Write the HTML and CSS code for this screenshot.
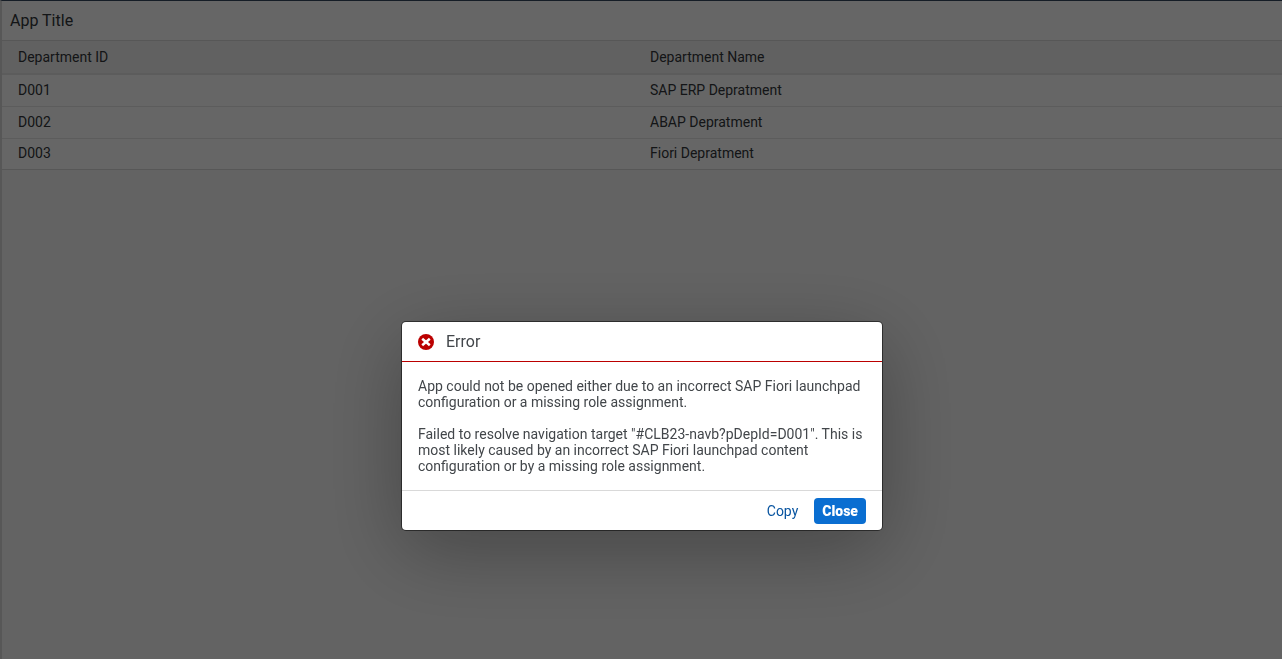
FILE: index.html
```html
<!DOCTYPE html>
<html lang="en">
<head>
<meta charset="utf-8">
<meta name="viewport" content="width=device-width, initial-scale=1">
<title>App Title</title>
<link rel="stylesheet" href="styles.css">
</head>
<body>
<main class="page">
  <header class="page-header">
    <h1 class="page-title">App Title</h1>
  </header>
  <table class="list">
    <thead>
      <tr><th scope="col">Department ID</th><th scope="col">Department Name</th></tr>
    </thead>
    <tbody>
      <tr><td>D001</td><td>SAP ERP Depratment</td></tr>
      <tr><td>D002</td><td>ABAP Depratment</td></tr>
      <tr><td>D003</td><td>Fiori Depratment</td></tr>
    </tbody>
  </table>
</main>
<div class="overlay">
  <section class="dialog" role="alertdialog" aria-modal="true" aria-labelledby="dialog-title" aria-describedby="dialog-text">
    <header class="dialog-header">
      <svg class="dialog-icon" viewBox="0 0 16 16" aria-hidden="true">
        <circle cx="8" cy="8" r="8" fill="#bb0000"/>
        <path d="M4.2 4.7l7.6 6.6M11.8 4.7l-7.6 6.6" fill="none" stroke="#fff" stroke-width="2.5"/>
      </svg>
      <h2 class="dialog-title" id="dialog-title">Error</h2>
    </header>
    <div class="dialog-body" id="dialog-text">
      <p>App could not be opened either due to an incorrect SAP Fiori launchpad configuration or a missing role assignment.</p>
      <p>Failed to resolve navigation target "#CLB23-navb?pDepId=D001". This is most likely caused by an incorrect SAP Fiori launchpad content configuration or by a missing role assignment.</p>
    </div>
    <footer class="dialog-footer">
      <button type="button" class="button">Copy</button>
      <button type="button" class="button button-primary">Close</button>
    </footer>
  </section>
</div>
</body>
</html>
```
FILE: styles.css
```css
* {
  box-sizing: border-box;
}

body {
  margin: 0;
  font-family: Roboto, "Liberation Sans", sans-serif;
  font-size: 14px;
  line-height: 16px;
  color: #32363a;
}

.page {
  min-height: 100vh;
  border-top: 1px solid #354a5f;
  border-left: 2px solid #d9d9d9;
  background: #f7f7f7;
}

.page-header {
  display: flex;
  align-items: center;
  height: 40px;
  padding: 0 8px;
  border-bottom: 1px solid #d9d9d9;
  background: #fff;
}

.page-title,
.dialog-title {
  margin: 0;
  font-size: 16px;
  font-weight: 400;
  line-height: 20px;
}

.list {
  width: 100%;
  table-layout: fixed;
  border-collapse: separate;
  border-spacing: 0;
  background: #fff;
}

.list th,
.list td {
  height: 32px;
  padding: 0 8px;
  border-bottom: 1px solid #e5e5e5;
  font-weight: 400;
  text-align: left;
  vertical-align: middle;
}

.list td {
  padding-bottom: 2px;
}

.list th:first-child,
.list td:first-child {
  padding-left: 16px;
}

.list th {
  height: 34px;
  border-bottom: 2px solid #e5e5e5;
  background: #f2f2f2;
}

.list tr:last-child td {
  height: 31px;
  border-bottom-color: #d9d9d9;
}

.overlay {
  position: fixed;
  inset: 0;
  display: flex;
  align-items: center;
  justify-content: center;
  padding: 193px 0 0 2px;
  background: rgba(0, 0, 0, 0.6);
}

.dialog {
  width: 480px;
  max-width: 100%;
  border-radius: 4px;
  background: #fff;
  box-shadow: 0 0 0 1px rgba(0, 0, 0, 0.5), 0 20px 80px rgba(0, 0, 0, 0.3);
}

.dialog-header {
  display: flex;
  align-items: center;
  gap: 12px;
  height: 40px;
  padding: 0 16px;
  border-bottom: 1px solid #bb0000;
}

.dialog-icon {
  width: 16px;
  height: 16px;
}

.dialog-title,
.dialog-body {
  color: #42464a;
}

.dialog-body {
  display: grid;
  gap: 16px;
  padding: 16px;
}

.dialog-body p {
  margin: 0;
}

.dialog-footer {
  display: flex;
  align-items: center;
  justify-content: flex-end;
  gap: 8px;
  height: 40px;
  padding: 0 16px;
  border-top: 1px solid #d9d9d9;
}

.button {
  height: 26px;
  padding: 0 8px;
  border: 0;
  border-radius: 4px;
  background: transparent;
  color: #0854a0;
  font: inherit;
  cursor: pointer;
}

.button-primary {
  background: #0a6ed1;
  color: #fff;
  font-weight: 900;
}
```
